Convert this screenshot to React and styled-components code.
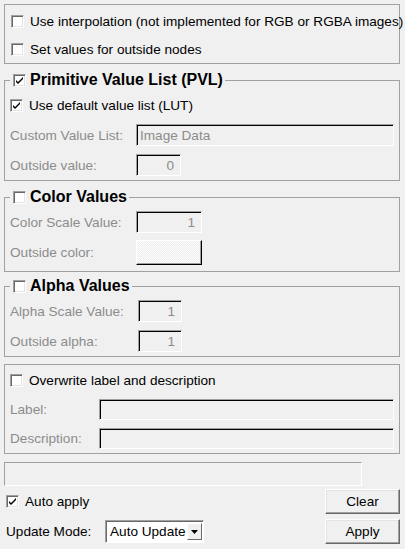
import React from 'react'
import styled, { createGlobalStyle } from 'styled-components'

const Global = createGlobalStyle`
    html, body {
        margin: 0;
        padding: 0;
        background: #f0f0f0;
    }
    body {
        font-family: "Liberation Sans", Arial, sans-serif;
        font-size: 13.6px;
        color: #000;
    }
`

const Page = styled.div`
    width: 405px;
    height: 549px;
    box-sizing: border-box;
    padding: 4px 5px 0 4px;
    display: flex;
    flex-direction: column;
`

const Group = styled.fieldset`
    margin: ${p => p.$top || 0}px 0 0 0;
    padding: ${p => p.$pad || '1px 5px 1px 5px'};
    border: 1px solid #a0a0a0;
    min-width: 0;
    display: flex;
    flex-direction: column;
`

const Legend = styled.legend`
    margin-left: 0;
    padding: 0 2px 0 3px;
    display: flex;
    align-items: center;
    gap: 4px;
    height: 20px;
    font-size: 16px;
    font-weight: 700;
    color: #000;
`

const Row = styled.div`
    display: flex;
    align-items: center;
    height: ${p => p.$h || 30}px;
    gap: 6px;
`

const Label = styled.span`
    color: ${p => (p.$disabled ? '#8c8c8c' : '#000')};
    width: ${p => (p.$w ? p.$w + 'px' : 'auto')};
    flex: none;
    white-space: nowrap;
`

const Box = styled.span`
    width: 13px;
    height: 13px;
    box-sizing: border-box;
    flex: none;
    background: #fff;
    border: 1px solid;
    border-color: #a0a0a0 #fff #fff #a0a0a0;
    box-shadow: inset 1px 1px 0 #696969, inset -1px -1px 0 #e3e3e3;
    display: inline-flex;
    align-items: center;
    justify-content: center;
`

const Field = styled.div`
    box-sizing: border-box;
    height: ${p => p.$h || 22}px;
    width: ${p => (p.$w ? p.$w + 'px' : 'auto')};
    flex: ${p => (p.$w ? 'none' : '1')};
    background: #f0f0f0;
    border: 1px solid;
    border-color: #a0a0a0 #fff #fff #a0a0a0;
    box-shadow: inset 1px 1px 0 #000;
    color: #8c8c8c;
    display: flex;
    align-items: center;
    justify-content: ${p => (p.$right ? 'flex-end' : 'flex-start')};
    padding: 0 ${p => (p.$right ? '6px' : '3px')};
`

const ColorSwatch = styled.div`
    box-sizing: border-box;
    width: 66px;
    height: 25px;
    flex: none;
    border: 1px solid;
    border-color: #fff #000 #000 #fff;
    box-shadow: inset -1px -1px 0 #a0a0a0;
    background-color: #fbfbfb;
    background-image: repeating-conic-gradient(#ececec 0 25%, #ffffff 0 50%);
    background-size: 2px 2px;
`

const Status = styled.div`
    box-sizing: border-box;
    margin-top: 8px;
    width: 358px;
    height: 24px;
    border: 1px solid;
    border-color: #a0a0a0 #fff #fff #a0a0a0;
`

const Bottom = styled.div`
    margin-top: 3px;
    display: grid;
    grid-template-columns: 1fr 75px;
    grid-template-rows: 25px 25px;
    row-gap: 5px;
    padding-left: 2px;
`

const Button = styled.div`
    box-sizing: border-box;
    border: 1px solid;
    border-color: #fff #696969 #696969 #fff;
    box-shadow: inset -1px -1px 0 #a0a0a0, inset 1px 1px 0 #e3e3e3;
    background: #f0f0f0;
    display: flex;
    align-items: center;
    justify-content: center;
`

const Combo = styled.div`
    box-sizing: border-box;
    width: 99px;
    height: 23px;
    flex: none;
    background: #fff;
    border: 1px solid;
    border-color: #a0a0a0 #fff #fff #a0a0a0;
    box-shadow: inset 1px 1px 0 #696969;
    display: flex;
    align-items: center;
    padding: 2px 1px 2px 4px;
`

const ComboText = styled.span`
    flex: 1;
    white-space: nowrap;
`

const Arrow = styled.span`
    width: 15px;
    height: 17px;
    box-sizing: border-box;
    flex: none;
    border: 1px solid;
    border-color: #fff #696969 #696969 #fff;
    background: #f0f0f0;
    display: flex;
    align-items: center;
    justify-content: center;
`

const Check = ({ on }) => (
    <Box>
        {on && (
            <svg width="9" height="9" viewBox="0 0 9 9">
                <path d="M1 4 L3 6 L8 1 L8 3 L3 8 L1 6 Z" fill="#000" />
            </svg>
        )}
    </Box>
)

const CheckRow = ({ on, h, children }) => (
    <Row $h={h}>
        <Check on={on} />
        <Label>{children}</Label>
    </Row>
)

const FormRow = ({ label, w, children, h }) => (
    <Row $h={h}>
        <Label $disabled $w={w}>{label}</Label>
        {children}
    </Row>
)

const App = () => {
    return (
        <Page>
            <Global />
            <Group $pad="2px 5px 0 6px">
                <CheckRow h={28}>Use interpolation (not implemented for RGB or RGBA images)</CheckRow>
                <CheckRow h={28}>Set values for outside nodes</CheckRow>
            </Group>

            <Group $top={6} $pad="0 5px 0 5px">
                <Legend><Check on />Primitive Value List (PVL)</Legend>
                <CheckRow on>Use default value list (LUT)</CheckRow>
                <FormRow label="Custom Value List:" w={120}>
                    <Field>Image Data</Field>
                </FormRow>
                <FormRow label="Outside value:" w={120}>
                    <Field $w={45} $right>0</Field>
                </FormRow>
            </Group>

            <Group $top={6} $pad="0 5px 3px 5px">
                <Legend><Check />Color Values</Legend>
                <FormRow label="Color Scale Value:" w={120}>
                    <Field $w={66} $right>1</Field>
                </FormRow>
                <FormRow label="Outside color:" w={120} h={31}>
                    <ColorSwatch />
                </FormRow>
            </Group>

            <Group $top={4} $pad="0 5px 0 5px">
                <Legend><Check />Alpha Values</Legend>
                <FormRow label="Alpha Scale Value:" w={122}>
                    <Field $w={44} $right>1</Field>
                </FormRow>
                <FormRow label="Outside alpha:" w={122}>
                    <Field $w={44} $right>1</Field>
                </FormRow>
            </Group>

            <Group $top={7} $pad="1px 5px 0 5px">
                <CheckRow h={29}>Overwrite label and description</CheckRow>
                <FormRow label="Label:" w={83} h={29}>
                    <Field $h={21} />
                </FormRow>
                <FormRow label="Description:" w={83} h={29}>
                    <Field $h={21} />
                </FormRow>
            </Group>

            <Status />

            <Bottom>
                <Row $h={25}>
                    <Check on />
                    <Label>Auto apply</Label>
                </Row>
                <Button>Clear</Button>
                <Row $h={25} style={{ gap: 0 }}>
                    <Label $w={99}>Update Mode:</Label>
                    <Combo>
                        <ComboText>Auto Update</ComboText>
                        <Arrow>
                            <svg width="7" height="4" viewBox="0 0 7 4">
                                <path d="M0 0 H7 L3.5 4 Z" fill="#000" />
                            </svg>
                        </Arrow>
                    </Combo>
                </Row>
                <Button>Apply</Button>
            </Bottom>
        </Page>
    )
}

export default App
